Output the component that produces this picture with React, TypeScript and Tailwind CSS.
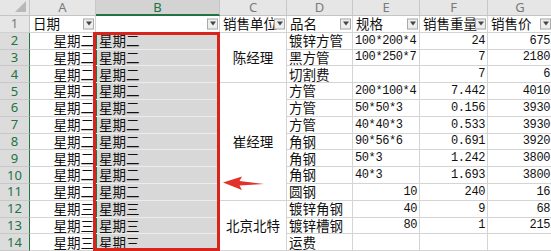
import type { ReactNode } from 'react';

type Row = { a: string; b: string; d: string; e: string; f: string; g: string };

const COLS = ['A', 'B', 'C', 'D', 'E', 'F', 'G'];

const ROWS: Row[] = [
  { a: '星期二', b: '星期二', d: '镀锌方管', e: '100*200*4', f: '24', g: '675' },
  { a: '星期二', b: '星期二', d: '黑方管', e: '100*250*7', f: '7', g: '2180' },
  { a: '星期二', b: '星期二', d: '切割费', e: '', f: '7', g: '6' },
  { a: '星期二', b: '星期二', d: '方管', e: '200*100*4', f: '7.442', g: '4010' },
  { a: '星期二', b: '星期二', d: '方管', e: '50*50*3', f: '0.156', g: '3930' },
  { a: '星期二', b: '星期二', d: '方管', e: '40*40*3', f: '0.533', g: '3930' },
  { a: '星期二', b: '星期二', d: '角钢', e: '90*56*6', f: '0.691', g: '3920' },
  { a: '星期二', b: '星期二', d: '角钢', e: '50*3', f: '1.242', g: '3800' },
  { a: '星期二', b: '星期二', d: '角钢', e: '40*3', f: '1.693', g: '3800' },
  { a: '星期二', b: '星期二', d: '圆钢', e: '10', f: '240', g: '16' },
  { a: '星期三', b: '星期三', d: '镀锌角钢', e: '40', f: '9', g: '68' },
  { a: '星期三', b: '星期三', d: '镀锌槽钢', e: '80', f: '1', g: '215' },
  { a: '星期三', b: '星期三', d: '运费', e: '', f: '', g: '' },
];

// merged cells in column C, keyed by sheet row
const MERGED: Record<number, { span: string; text: string }> = {
  2: { span: 'row-span-3', text: '陈经理' },
  5: { span: 'row-span-7', text: '崔经理' },
  12: { span: 'row-span-3', text: '北京北特' },
};

const cn = "font-['Noto_Sans_CJK_SC',sans-serif] text-[13.5px] leading-none text-[#111]";
const num = "font-['Liberation_Mono',monospace] text-[12px] tracking-[-0.4px] leading-none text-[#111]";
const isNum = (s: string) => /^[0-9.]+$/.test(s);

const Cell = ({ children, className = '' }: { children?: ReactNode; className?: string }) => (
  <div
    className={`relative flex items-center overflow-hidden whitespace-nowrap border-r border-b border-[#d4d4d4] bg-white ${className}`}
  >
    {children}
  </div>
);

const FilterButton = () => (
  <div className="absolute right-[1px] top-1/2 -translate-y-1/2 flex h-[11px] w-[11px] items-center justify-center border border-[#a9a9a9] bg-[#eeeeee]">
    <div className="h-0 w-0 border-x-[3px] border-t-[4px] border-x-transparent border-t-[#444]" />
  </div>
);

const TextCell = ({ v, className = '' }: { v: string; className?: string }) => {
  const right = isNum(v);
  return (
    <Cell className={`${right ? 'justify-end pr-[2px]' : 'justify-start pl-[2px]'} ${className}`}>
      <span className={right || /^[0-9*.]+$/.test(v) ? num : cn}>{v}</span>
    </Cell>
  );
};

export default function App() {
  return (
    <div className="relative h-[251px] w-[551px] overflow-hidden bg-white">
      <div className="grid grid-cols-[30px_66px_124px_67px_66px_67px_68px_65px] grid-rows-[16px_repeat(14,16.8px)]">
        {/* column headers */}
        <div className="relative border-r border-b border-[#c4c4c4] bg-[#e6e6e6]">
          <div className="absolute bottom-[3px] right-[3px] h-0 w-0 border-l-[11px] border-t-[11px] border-l-transparent border-t-transparent border-b-0 border-r-[0px] [border-bottom:11px_solid_#b8b8b8]" />
        </div>
        {COLS.map((c) => (
          <div
            key={c}
            className={`flex items-center justify-center border-r font-['Noto_Sans',sans-serif] text-[13px] leading-none ${
              c === 'B'
                ? 'border-b-2 border-r-[#c4c4c4] border-b-[#217346] bg-[#d3d3d3] text-[#217346]'
                : 'border-b border-r-[#c8c8c8] border-b-[#c4c4c4] bg-[#e6e6e6] text-[#7a7a7a]'
            }`}
          >
            {c}
          </div>
        ))}

        {/* row 1: filter headers */}
        <div className="flex items-center justify-center border-r border-b border-r-[#c4c4c4] border-b-[#d0d0d0] bg-[#e6e6e6] font-['Noto_Sans',sans-serif] text-[13px] leading-none text-[#7a7a7a]">
          1
        </div>
        {['日期', '', '销售单位', '品名', '规格', '销售重量', '销售价'].map((h, i) => (
          <Cell key={i} className="pl-[3px]">
            <span className={cn}>{h}</span>
            <FilterButton />
          </Cell>
        ))}

        {ROWS.map((r, i) => {
          const n = i + 2;
          const merged = MERGED[n];
          return [
            <div
              key={`h${n}`}
              className="flex items-center justify-center border-r border-b border-r-[#217346] border-b-[#c8c8c8] bg-[#dcdcdc] font-['Noto_Sans',sans-serif] text-[13px] leading-none text-[#217346]"
            >
              {n}
            </div>,
            <Cell key={`a${n}`} className="justify-end pr-[1px]">
              <span className={cn}>{r.a}</span>
            </Cell>,
            <Cell key={`b${n}`} className="!bg-[#d8d8d8] !border-b-[#ececec] pl-[3px] shadow-[inset_1px_0_0_#217346]">
              <span className={cn}>{r.b}</span>
            </Cell>,
            merged ? (
              <Cell key={`c${n}`} className={`${merged.span} justify-center`}>
                <span className={cn}>{merged.text}</span>
              </Cell>
            ) : null,
            <TextCell key={`d${n}`} v={r.d} />,
            <TextCell key={`e${n}`} v={r.e} />,
            <TextCell key={`f${n}`} v={r.f} />,
            <TextCell key={`g${n}`} v={r.g} />,
          ];
        })}
      </div>

      {/* annotation: red box round B2:B14 and arrow */}
      <div className="pointer-events-none absolute left-[93px] top-[32px] h-[219px] w-[127px] border-[3px] border-[#d9231d]" />
      <svg className="pointer-events-none absolute left-[220px] top-[172px]" width="50" height="22" viewBox="0 0 50 22">
        <polygon points="3,10.5 22,4.5 19.5,9 44,12 19.5,13.5 22,18" fill="#e2322b" />
      </svg>
    </div>
  );
}
